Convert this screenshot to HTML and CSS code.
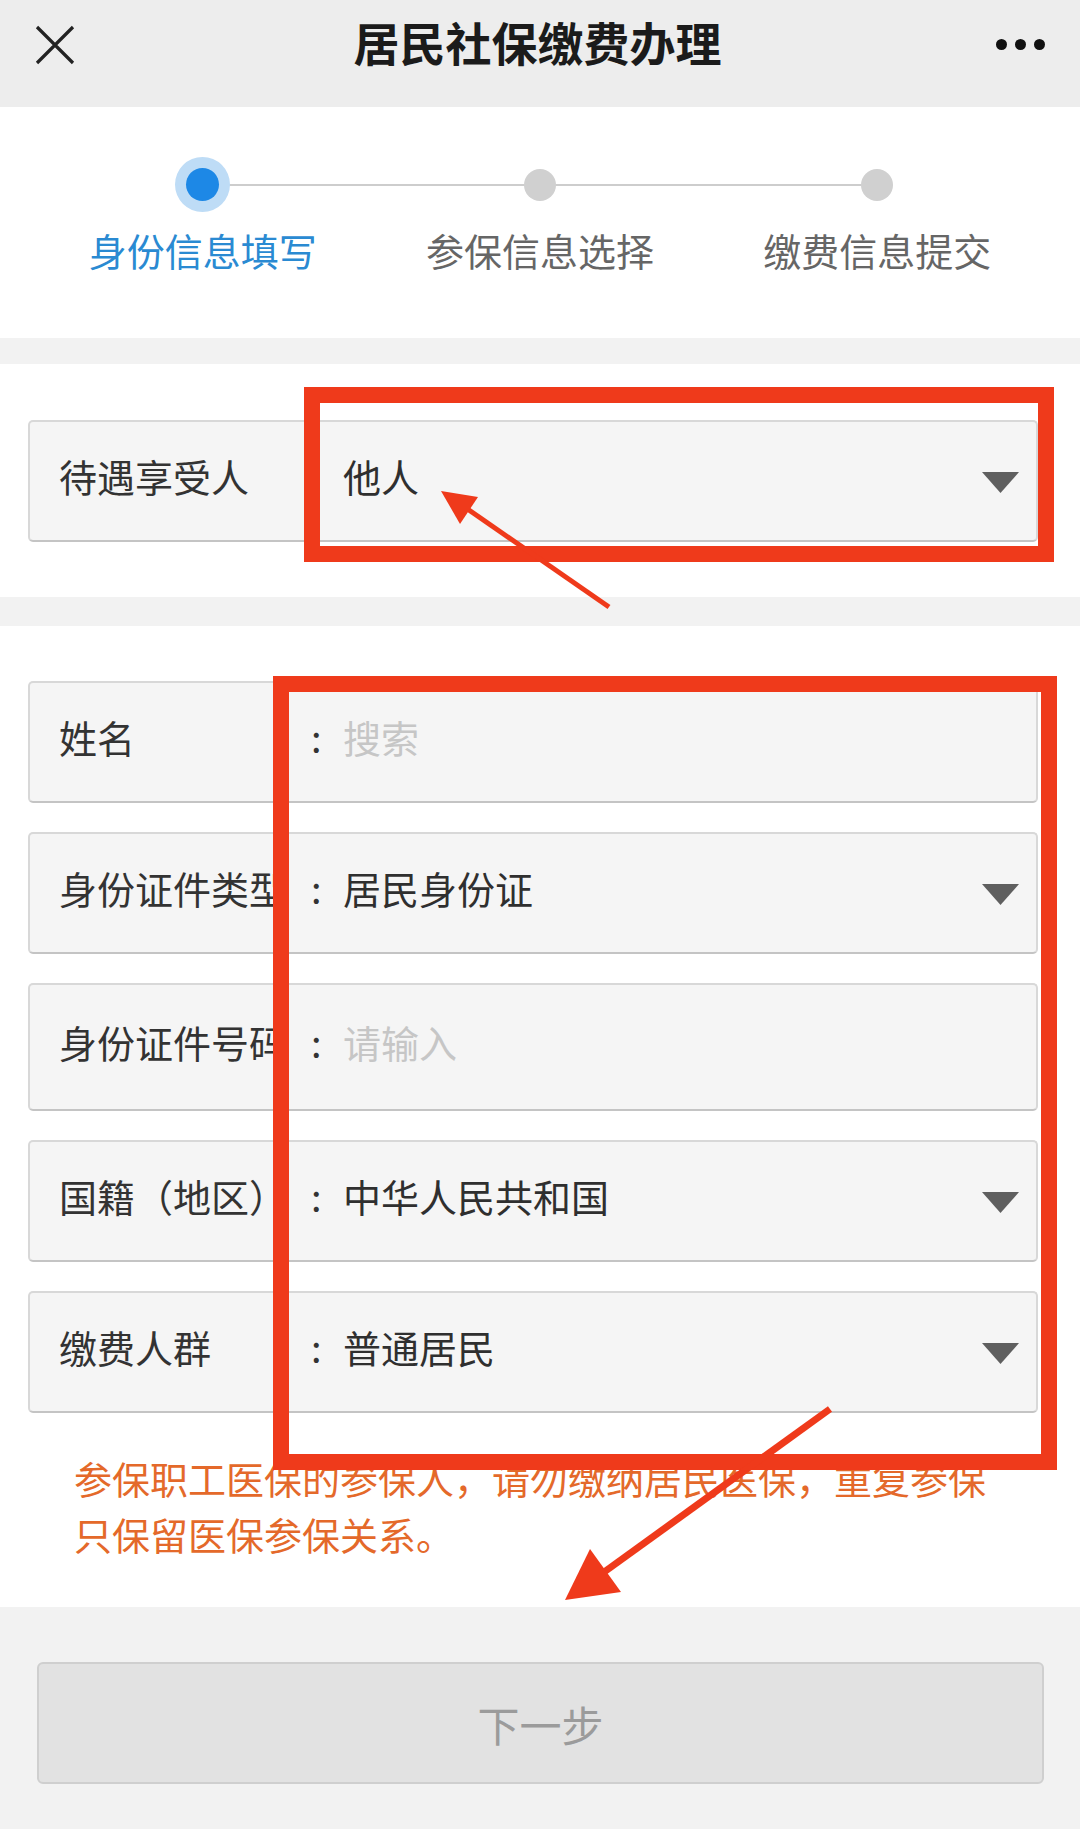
FILE: index.html
```html
<!DOCTYPE html>
<html lang="zh-CN">
<head>
  <meta charset="UTF-8">
  <meta name="viewport" content="width=device-width, initial-scale=1.0">
  <title>居民社保缴费办理</title>
  <link rel="stylesheet" href="styles.css">
</head>
<body>
  <header class="top-bar">
    <div class="close-btn">
      <svg width="40" height="40" viewBox="0 0 40 40">
        <path d="M2 2 L38 38 M38 2 L2 38" stroke="#222" stroke-width="3.2" fill="none"/>
      </svg>
    </div>
    <div class="title">居民社保缴费办理</div>
    <div class="more-btn">
      <span class="dot"></span><span class="dot"></span><span class="dot"></span>
    </div>
  </header>

  <section class="steps">
    <div class="step active">
      <div class="step-dot"><span></span></div>
      <div class="step-label">身份信息填写</div>
    </div>
    <div class="step">
      <div class="step-dot"><span></span></div>
      <div class="step-label">参保信息选择</div>
    </div>
    <div class="step last">
      <div class="step-dot"><span></span></div>
      <div class="step-label">缴费信息提交</div>
    </div>
  </section>

  <section class="panel panel-first">
    <div class="field">
      <div class="field-label">待遇享受人</div>
      <div class="field-colon"></div>
      <div class="field-value">他人</div>
      <svg class="caret" width="37" height="21" viewBox="0 0 37 21"><polygon points="0,0 37,0 18.5,21" fill="#5f5f5f"/></svg>
    </div>
  </section>

  <section class="panel panel-form">
    <div class="field">
      <div class="field-label">姓名</div>
      <div class="field-colon">:</div>
      <div class="field-value placeholder">搜索</div>
    </div>
    <div class="field">
      <div class="field-label">身份证件类型</div>
      <div class="field-colon">:</div>
      <div class="field-value">居民身份证</div>
      <svg class="caret" width="37" height="21" viewBox="0 0 37 21"><polygon points="0,0 37,0 18.5,21" fill="#5f5f5f"/></svg>
    </div>
    <div class="field field-tall">
      <div class="field-label">身份证件号码</div>
      <div class="field-colon">:</div>
      <div class="field-value placeholder">请输入</div>
    </div>
    <div class="field">
      <div class="field-label">国籍（地区）</div>
      <div class="field-colon">:</div>
      <div class="field-value">中华人民共和国</div>
      <svg class="caret" width="37" height="21" viewBox="0 0 37 21"><polygon points="0,0 37,0 18.5,21" fill="#5f5f5f"/></svg>
    </div>
    <div class="field">
      <div class="field-label">缴费人群</div>
      <div class="field-colon">:</div>
      <div class="field-value">普通居民</div>
      <svg class="caret" width="37" height="21" viewBox="0 0 37 21"><polygon points="0,0 37,0 18.5,21" fill="#5f5f5f"/></svg>
    </div>
    <p class="notice">参保职工医保的参保人，请勿缴纳居民医保，重复参保只保留医保参保关系。</p>
  </section>

  <footer class="bottom-bar">
    <button class="next-btn" disabled>下一步</button>
  </footer>

  <!-- annotation marks drawn over the screenshot -->
  <svg class="marks" width="1080" height="1829" viewBox="0 0 1080 1829">
    <rect x="312" y="395" width="734" height="159" fill="none" stroke="#ef3a1b" stroke-width="16"/>
    <rect x="281" y="684" width="768" height="778" fill="none" stroke="#ef3a1b" stroke-width="16"/>
    <line x1="609" y1="607" x2="466" y2="508" stroke="#ef3a1b" stroke-width="5"/>
    <polygon points="441,491 478,497 460,524" fill="#ef3a1b"/>
    <line x1="830" y1="1409" x2="600" y2="1575" stroke="#ef3a1b" stroke-width="7"/>
    <polygon points="565,1600 590,1549 621,1592" fill="#ef3a1b"/>
  </svg>
</body>
</html>
```

FILE: styles.css
```css
/* General Reset */
* {
  margin: 0;
  padding: 0;
  box-sizing: border-box;
}

body {
  position: relative;
  width: 1080px;
  min-height: 1829px;
  font-family: "Noto Sans CJK SC", "Noto Sans", sans-serif;
  background: #f2f2f2;
  color: #333;
  display: flex;
  flex-direction: column;
}

/* Top bar */
.top-bar {
  height: 107px;
  padding: 0 32px 18px 35px;
  background: #ededed;
  display: flex;
  align-items: center;
  justify-content: space-between;
}

.close-btn {
  width: 40px;
  height: 40px;
  display: flex;
}

.title {
  font-size: 46px;
  font-weight: bold;
  color: #1b1b1b;
  line-height: 1;
  margin: 0 0 8px 4px;
}

.more-btn {
  width: 52px;
  display: flex;
  gap: 8px;
}

.dot {
  width: 11px;
  height: 11px;
  border-radius: 50%;
  background: #111;
}

/* Progress steps */
.steps {
  background: #fff;
  height: 231px;
  padding: 50px 34px 0;
  margin-bottom: 26px;
  display: flex;
}

.step {
  position: relative;
  flex: 1;
  display: flex;
  flex-direction: column;
  align-items: center;
}

.step::after {
  content: "";
  position: absolute;
  top: 27px;
  left: 50%;
  width: 100%;
  height: 2px;
  background: #cdcdcd;
}

.step.last::after {
  display: none;
}

.step-dot {
  position: relative;
  z-index: 1;
  width: 55px;
  height: 55px;
  display: flex;
  align-items: center;
  justify-content: center;
}

.step-dot span {
  width: 32px;
  height: 32px;
  border-radius: 50%;
  background: #d0d0d0;
}

.step.active .step-dot span {
  width: 33px;
  height: 33px;
  background: #1d88e6;
  box-shadow: 0 0 0 11px #bedcf6;
}

.step-label {
  margin-top: 16px;
  font-size: 38px;
  line-height: 44px;
  color: #666;
  white-space: nowrap;
}

.step.active .step-label {
  color: #2a8ad2;
}

/* Form panels */
.panel {
  background: #fff;
  display: flex;
  flex-direction: column;
  gap: 29px;
}

.panel-first {
  padding: 56px 42px 55px 28px;
  margin-bottom: 29px;
}

.panel-form {
  padding: 55px 42px 43px 28px;
}

.field {
  height: 122px;
  background: #f5f5f5;
  border: 2px solid #d8d8d8;
  border-bottom-color: #c4c4c4;
  border-radius: 5px;
  padding: 0 17px 0 29px;
  display: flex;
  align-items: center;
  font-size: 38px;
}

.field-tall {
  height: 128px;
}

.field-label,
.field-colon,
.field-value {
  padding-bottom: 12px;
}

.field-label {
  width: 241px;
  color: #333;
  white-space: nowrap;
  overflow: hidden;
}

.field-colon {
  width: 43px;
  padding-left: 11px;
  color: #333;
}

.field-value {
  flex: 1;
  color: #2f2f2f;
}

.field-value.placeholder {
  color: #c6c6c6;
}

.caret {
  flex-shrink: 0;
  margin-top: 2px;
}

.notice {
  margin: 8px 38px 2px 46px;
  font-size: 38px;
  line-height: 56px;
  color: #e4692a;
}

/* Bottom bar */
.bottom-bar {
  flex: 1;
  padding: 55px 36px 45px 37px;
  background: #f2f2f2;
}

.next-btn {
  width: 100%;
  height: 122px;
  font-family: inherit;
  font-size: 42px;
  color: #9b9b9b;
  background: #e2e2e2;
  border: 2px solid #cfcfcf;
  border-radius: 6px;
}

/* Annotation overlay */
.marks {
  position: absolute;
  top: 0;
  left: 0;
  pointer-events: none;
}
```
